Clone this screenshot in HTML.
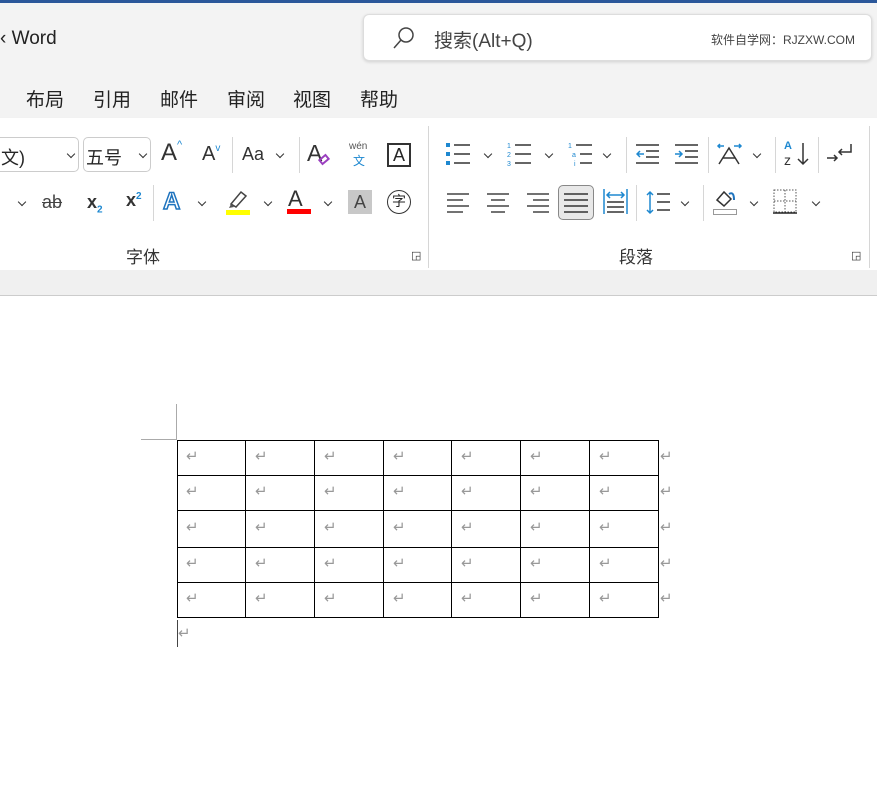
<!DOCTYPE html>
<html><head><meta charset="utf-8"><style>
*{margin:0;padding:0;box-sizing:border-box}
body{width:877px;height:791px;overflow:hidden;background:#fff;font-family:"Liberation Sans","Noto Sans CJK SC",sans-serif;position:relative;color:#262626}
.a{position:absolute}
.t{font-size:19px;color:#222}
.dd{position:absolute;font-size:0;width:6px;height:6px;border-right:1.5px solid #333;border-bottom:1.5px solid #333;transform:translate(2px,3px) rotate(45deg)}
.sep{position:absolute;width:1px;background:#d6d6d6}
</style></head><body>
<div class="a" style="left:0;top:0;width:877px;height:3px;background:#2b579a"></div>
<div class="a" style="left:0;top:3px;width:877px;height:115px;background:#f3f3f3"></div>
<div class="a" style="left:0;top:28px;font-size:19px;color:#222">‹ Word</div>
<div class="a" style="left:363px;top:14px;width:509px;height:47px;background:#fff;border:1px solid #ddd;border-radius:6px;box-shadow:0 1px 3px rgba(0,0,0,.15)"></div>
<svg class="a" style="left:392px;top:26px" width="24" height="24"><circle cx="14" cy="9" r="7" fill="none" stroke="#444" stroke-width="1.5"/><line x1="9" y1="14" x2="2" y2="22" stroke="#444" stroke-width="1.5"/></svg>
<div class="a" style="left:434px;top:26px;font-size:19px;color:#444">搜索(Alt+Q)</div>
<div class="a" style="left:711px;top:31px;font-size:12px;color:#444">软件自学网：RJZXW.COM</div>
<div class="a t" style="left:26px;top:85px">布局</div>
<div class="a t" style="left:93px;top:85px">引用</div>
<div class="a t" style="left:160px;top:85px">邮件</div>
<div class="a t" style="left:227px;top:85px">审阅</div>
<div class="a t" style="left:293px;top:85px">视图</div>
<div class="a t" style="left:360px;top:85px">帮助</div>
<div class="a" style="left:0;top:118px;width:877px;height:152px;background:#fff;box-shadow:0 2px 3px rgba(0,0,0,.12)"></div>
<div class="a" style="left:0;top:270px;width:877px;height:26px;background:#f0f0f0;border-bottom:1px solid #ccc"></div>
<div class="a" style="left:-10px;top:137px;width:89px;height:35px;border:1px solid #ccc;border-radius:5px;font-size:18px;padding:6px 0 0 10px">文)</div>
<div class="dd" style="left:66px;top:148px"></div>
<div class="a" style="left:83px;top:137px;width:68px;height:35px;border:1px solid #ccc;border-radius:5px;font-size:18px;padding:6px 0 0 2px">五号</div>
<div class="dd" style="left:138px;top:148px"></div>
<div class="a" style="left:161px;top:139px;font-size:24px;color:#333">A<span style="font-size:11px;color:#1e88d0;vertical-align:top">^</span></div>
<div class="a" style="left:202px;top:143px;font-size:20px;color:#333">A<span style="font-size:10px;color:#1e88d0;vertical-align:top">v</span></div>
<div class="sep" style="left:232px;top:137px;height:36px"></div>
<div class="a" style="left:242px;top:144px;font-size:18px;color:#333">Aa</div><div class="dd" style="left:275px;top:148px"></div>
<div class="sep" style="left:299px;top:137px;height:36px"></div>
<div class="a" style="left:307px;top:140px;font-size:23px;color:#333">A</div><div class="a" style="left:319px;top:156px;width:10px;height:7px;border:2px solid #9a3fbf;transform:rotate(-40deg)"></div>
<div class="a" style="left:349px;top:141px;font-size:10px;color:#555">wén</div><div class="a" style="left:353px;top:152px;font-size:12px;color:#1e88d0">文</div>
<div class="a" style="left:387px;top:143px;width:24px;height:24px;border:2px solid #333;font-size:18px;text-align:center;line-height:20px">A</div>
<div class="dd" style="left:17px;top:196px"></div>
<div class="a" style="left:42px;top:192px;font-size:18px;color:#444;text-decoration:line-through">ab</div>
<div class="a" style="left:87px;top:192px;font-size:18px;font-weight:bold;color:#333">x<sub style="font-size:10px;color:#1e88d0">2</sub></div>
<div class="a" style="left:126px;top:190px;font-size:18px;font-weight:bold;color:#333">x<sup style="font-size:10px;color:#1e88d0">2</sup></div>
<div class="sep" style="left:153px;top:185px;height:36px"></div>
<div class="a" style="left:163px;top:188px;font-size:24px;font-weight:bold;color:#fff;-webkit-text-stroke:1.5px #1e73be">A</div><div class="dd" style="left:197px;top:196px"></div>
<svg class="a" style="left:226px;top:188px" width="26" height="28"><path d="M5 16 L15 4 L20 8 L10 19 Z" fill="none" stroke="#444" stroke-width="1.5"/><path d="M5 16 l-2 4 5 -1z" fill="#555"/><rect x="0" y="22" width="24" height="5" fill="#ffff00"/></svg>
<div class="dd" style="left:263px;top:196px"></div>
<div class="a" style="left:288px;top:186px;font-size:22px;color:#333">A</div><div class="a" style="left:287px;top:209px;width:24px;height:5px;background:#f00"></div>
<div class="dd" style="left:323px;top:196px"></div>
<div class="a" style="left:348px;top:190px;width:24px;height:24px;background:#c8c8c8;font-size:18px;text-align:center;line-height:24px;color:#444">A</div>
<div class="a" style="left:387px;top:190px;width:24px;height:24px;border:1.5px solid #333;border-radius:50%;font-size:14px;text-align:center;line-height:21px">字</div>
<div class="a" style="left:126px;top:243px;font-size:17px;color:#333">字体</div>
<div class="a" style="left:411px;top:249px;font-size:11px;color:#333">◲</div>
<div class="sep" style="left:428px;top:126px;height:142px"></div>
<svg class="a" style="left:446px;top:142px" width="26" height="24"><g fill="#1e88d0"><rect x="0" y="1" width="4" height="4"/><rect x="0" y="10" width="4" height="4"/><rect x="0" y="19" width="4" height="4"/></g><g stroke="#333" stroke-width="1.5"><line x1="8" y1="3" x2="24" y2="3"/><line x1="8" y1="12" x2="24" y2="12"/><line x1="8" y1="21" x2="24" y2="21"/></g></svg>
<div class="dd" style="left:483px;top:148px"></div>
<svg class="a" style="left:507px;top:142px" width="26" height="24"><g fill="#1e88d0" font-size="7" font-family="Liberation Sans"><text x="0" y="6">1</text><text x="0" y="15">2</text><text x="0" y="24">3</text></g><g stroke="#333" stroke-width="1.5"><line x1="8" y1="3" x2="24" y2="3"/><line x1="8" y1="12" x2="24" y2="12"/><line x1="8" y1="21" x2="24" y2="21"/></g></svg>
<div class="dd" style="left:544px;top:148px"></div>
<svg class="a" style="left:568px;top:142px" width="26" height="24"><g fill="#1e88d0" font-size="7" font-family="Liberation Sans"><text x="0" y="6">1</text><text x="4" y="15">a</text><text x="6" y="24">i</text></g><g stroke="#333" stroke-width="1.5"><line x1="8" y1="3" x2="24" y2="3"/><line x1="12" y1="12" x2="24" y2="12"/><line x1="12" y1="21" x2="24" y2="21"/></g></svg>
<div class="dd" style="left:602px;top:148px"></div>
<div class="sep" style="left:626px;top:137px;height:36px"></div>
<svg class="a" style="left:636px;top:143px" width="24" height="22"><g stroke="#333" stroke-width="1.5"><line x1="0" y1="2" x2="23" y2="2"/><line x1="10" y1="8" x2="23" y2="8"/><line x1="10" y1="14" x2="23" y2="14"/><line x1="0" y1="20" x2="23" y2="20"/></g><path d="M8 11 H1 M4 8 L1 11 L4 14" stroke="#1e88d0" stroke-width="1.5" fill="none"/></svg>
<svg class="a" style="left:675px;top:143px" width="24" height="22"><g stroke="#333" stroke-width="1.5"><line x1="0" y1="2" x2="23" y2="2"/><line x1="10" y1="8" x2="23" y2="8"/><line x1="10" y1="14" x2="23" y2="14"/><line x1="0" y1="20" x2="23" y2="20"/></g><path d="M0 11 H7 M4 8 L7 11 L4 14" stroke="#1e88d0" stroke-width="1.5" fill="none"/></svg>
<div class="sep" style="left:708px;top:137px;height:36px"></div>
<svg class="a" style="left:716px;top:142px" width="28" height="24"><path d="M3 22 L13 6 L23 22 M7 16 H19" stroke="#333" stroke-width="1.5" fill="none"/><path d="M2 4 H8 M4 2 L2 4 L4 6 M18 4 H25 M23 2 L25 4 L23 6" stroke="#1e88d0" stroke-width="1.5" fill="none"/></svg>
<div class="dd" style="left:752px;top:148px"></div>
<div class="sep" style="left:775px;top:137px;height:36px"></div>
<div class="a" style="left:784px;top:140px;font-size:11px;font-weight:bold;color:#1e88d0">A</div><div class="a" style="left:784px;top:152px;font-size:14px;color:#333">z</div>
<svg class="a" style="left:796px;top:143px" width="14" height="24"><path d="M7 0 V21 M2 16 L7 21 L12 16" stroke="#333" stroke-width="1.5" fill="none"/></svg>
<div class="sep" style="left:818px;top:137px;height:36px"></div>
<svg class="a" style="left:827px;top:142px" width="28" height="24"><path d="M24 2 V10 H12 M15 7 L12 10 L15 13 M0 16 H10 M7 13 L10 16 L7 19" stroke="#333" stroke-width="1.5" fill="none"/></svg>
<svg class="a" style="left:447px;top:192px" width="24" height="22"><g stroke="#444" stroke-width="1.5"><line x1="0" y1="2" x2="22" y2="2"/><line x1="0" y1="8" x2="16" y2="8"/><line x1="0" y1="14" x2="22" y2="14"/><line x1="0" y1="20" x2="16" y2="20"/></g></svg>
<svg class="a" style="left:486px;top:192px" width="24" height="22"><g stroke="#444" stroke-width="1.5"><line x1="1" y1="2" x2="23" y2="2"/><line x1="5" y1="8" x2="19" y2="8"/><line x1="1" y1="14" x2="23" y2="14"/><line x1="5" y1="20" x2="19" y2="20"/></g></svg>
<svg class="a" style="left:525px;top:192px" width="24" height="22"><g stroke="#444" stroke-width="1.5"><line x1="2" y1="2" x2="24" y2="2"/><line x1="8" y1="8" x2="24" y2="8"/><line x1="2" y1="14" x2="24" y2="14"/><line x1="8" y1="20" x2="24" y2="20"/></g></svg>
<div class="a" style="left:558px;top:185px;width:36px;height:35px;background:#e8e8e8;border:1px solid #888;border-radius:5px"></div>
<svg class="a" style="left:564px;top:192px" width="24" height="22"><g stroke="#333" stroke-width="1.5"><line x1="0" y1="2" x2="24" y2="2"/><line x1="0" y1="8" x2="24" y2="8"/><line x1="0" y1="14" x2="24" y2="14"/><line x1="0" y1="20" x2="24" y2="20"/></g></svg>
<svg class="a" style="left:603px;top:189px" width="26" height="26"><g stroke="#1e88d0" stroke-width="1.5" fill="none"><line x1="1" y1="0" x2="1" y2="25"/><line x1="24" y1="0" x2="24" y2="25"/><path d="M4 6 H21 M7 3 L4 6 L7 9 M18 3 L21 6 L18 9"/></g><g stroke="#333" stroke-width="1.5"><line x1="4" y1="13" x2="21" y2="13"/><line x1="4" y1="18" x2="21" y2="18"/><line x1="4" y1="23" x2="21" y2="23"/></g></svg>
<div class="sep" style="left:636px;top:185px;height:36px"></div>
<svg class="a" style="left:645px;top:190px" width="26" height="26"><path d="M5 2 V23 M2 5 L5 2 L8 5 M2 20 L5 23 L8 20" stroke="#1e88d0" stroke-width="1.5" fill="none"/><g stroke="#333" stroke-width="1.5"><line x1="12" y1="4" x2="25" y2="4"/><line x1="12" y1="12" x2="25" y2="12"/><line x1="12" y1="20" x2="25" y2="20"/></g></svg>
<div class="dd" style="left:680px;top:196px"></div>
<div class="sep" style="left:703px;top:185px;height:36px"></div>
<svg class="a" style="left:713px;top:188px" width="26" height="28"><path d="M4 12 L11 4 L18 11 L11 18 Z" stroke="#333" stroke-width="1.5" fill="none"/><path d="M16 6 Q21 3 21 12" stroke="#1e73be" stroke-width="2" fill="none"/><rect x="0.5" y="21.5" width="23" height="5" fill="none" stroke="#999"/></svg>
<div class="dd" style="left:749px;top:196px"></div>
<svg class="a" style="left:773px;top:189px" width="26" height="26"><rect x="1" y="1" width="22" height="22" fill="none" stroke="#555" stroke-dasharray="1.5 1.5"/><line x1="12" y1="1" x2="12" y2="23" stroke="#555" stroke-dasharray="1.5 1.5"/><line x1="1" y1="12" x2="23" y2="12" stroke="#555" stroke-dasharray="1.5 1.5"/><line x1="0" y1="24" x2="24" y2="24" stroke="#222" stroke-width="1.5"/></svg>
<div class="dd" style="left:811px;top:196px"></div>
<div class="a" style="left:619px;top:243px;font-size:17px;color:#333">段落</div>
<div class="a" style="left:851px;top:249px;font-size:11px;color:#333">◲</div>
<div class="sep" style="left:869px;top:126px;height:142px"></div>
<div class="a" style="left:176px;top:404px;width:1px;height:36px;background:#aaa"></div>
<div class="a" style="left:141px;top:439px;width:36px;height:1px;background:#aaa"></div>
<svg class="a" style="left:0;top:0" width="877" height="791">
<g stroke="#000" stroke-width="1" shape-rendering="crispEdges">
<line x1="177.5" y1="440" x2="177.5" y2="618"/><line x1="245.5" y1="440" x2="245.5" y2="618"/><line x1="314.5" y1="440" x2="314.5" y2="618"/><line x1="383.5" y1="440" x2="383.5" y2="618"/><line x1="451.5" y1="440" x2="451.5" y2="618"/><line x1="520.5" y1="440" x2="520.5" y2="618"/><line x1="589.5" y1="440" x2="589.5" y2="618"/><line x1="658.5" y1="440" x2="658.5" y2="618"/>
<line x1="177" y1="440.5" x2="659" y2="440.5"/><line x1="177" y1="475.5" x2="659" y2="475.5"/><line x1="177" y1="510.5" x2="659" y2="510.5"/><line x1="177" y1="547.5" x2="659" y2="547.5"/><line x1="177" y1="582.5" x2="659" y2="582.5"/><line x1="177" y1="617.5" x2="659" y2="617.5"/>
</g>
<line x1="177.5" y1="620" x2="177.5" y2="647" stroke="#444"/>
<g fill="#999" font-size="15" font-family="DejaVu Sans">
<text x="186" y="461">↵</text><text x="255" y="461">↵</text><text x="324" y="461">↵</text><text x="393" y="461">↵</text><text x="461" y="461">↵</text><text x="530" y="461">↵</text><text x="599" y="461">↵</text><text x="660" y="461">↵</text>
<text x="186" y="496">↵</text><text x="255" y="496">↵</text><text x="324" y="496">↵</text><text x="393" y="496">↵</text><text x="461" y="496">↵</text><text x="530" y="496">↵</text><text x="599" y="496">↵</text><text x="660" y="496">↵</text>
<text x="186" y="532">↵</text><text x="255" y="532">↵</text><text x="324" y="532">↵</text><text x="393" y="532">↵</text><text x="461" y="532">↵</text><text x="530" y="532">↵</text><text x="599" y="532">↵</text><text x="660" y="532">↵</text>
<text x="186" y="568">↵</text><text x="255" y="568">↵</text><text x="324" y="568">↵</text><text x="393" y="568">↵</text><text x="461" y="568">↵</text><text x="530" y="568">↵</text><text x="599" y="568">↵</text><text x="660" y="568">↵</text>
<text x="186" y="603">↵</text><text x="255" y="603">↵</text><text x="324" y="603">↵</text><text x="393" y="603">↵</text><text x="461" y="603">↵</text><text x="530" y="603">↵</text><text x="599" y="603">↵</text><text x="660" y="603">↵</text>
<text x="178" y="638">↵</text>
</g>
</svg>
</body></html>
